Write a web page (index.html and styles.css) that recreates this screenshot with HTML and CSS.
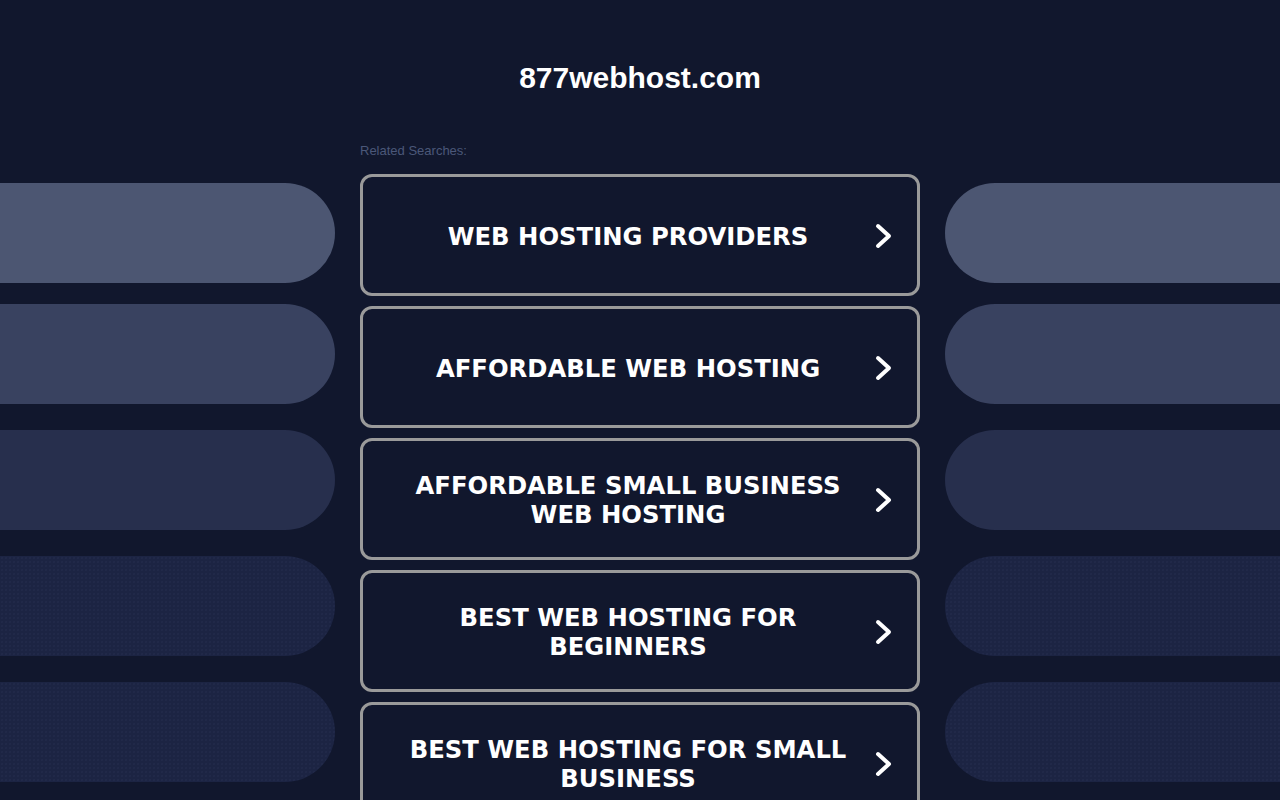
FILE: index.html
```html
<!DOCTYPE html>
<html lang="en">
<head>
  <meta charset="UTF-8">
  <meta name="viewport" content="width=device-width, initial-scale=1.0">
  <title>877webhost.com</title>
  <link rel="stylesheet" href="styles.css">
</head>
<body>
  <header>
    <h1 class="domain">877webhost.com</h1>
  </header>

  <div class="layout">
    <div class="side side-left">
      <div class="pill pill-1"></div>
      <div class="pill pill-2"></div>
      <div class="pill pill-3"></div>
      <div class="pill pill-4"></div>
      <div class="pill pill-5"></div>
    </div>

    <div class="searches">
      <p class="searches-label">Related Searches:</p>
      <a href="#" class="search-link">
        <span class="search-text">WEB HOSTING PROVIDERS</span>
        <svg class="chevron" viewBox="0 0 20 28"><polyline points="5,4 16,14 5,24"/></svg>
      </a>
      <a href="#" class="search-link">
        <span class="search-text">AFFORDABLE WEB HOSTING</span>
        <svg class="chevron" viewBox="0 0 20 28"><polyline points="5,4 16,14 5,24"/></svg>
      </a>
      <a href="#" class="search-link">
        <span class="search-text">AFFORDABLE SMALL BUSINESS WEB HOSTING</span>
        <svg class="chevron" viewBox="0 0 20 28"><polyline points="5,4 16,14 5,24"/></svg>
      </a>
      <a href="#" class="search-link">
        <span class="search-text">BEST WEB HOSTING FOR BEGINNERS</span>
        <svg class="chevron" viewBox="0 0 20 28"><polyline points="5,4 16,14 5,24"/></svg>
      </a>
      <a href="#" class="search-link">
        <span class="search-text">BEST WEB HOSTING FOR SMALL BUSINESS</span>
        <svg class="chevron" viewBox="0 0 20 28"><polyline points="5,4 16,14 5,24"/></svg>
      </a>
    </div>

    <div class="side side-right">
      <div class="pill pill-1"></div>
      <div class="pill pill-2"></div>
      <div class="pill pill-3"></div>
      <div class="pill pill-4"></div>
      <div class="pill pill-5"></div>
    </div>
  </div>
</body>
</html>
```

FILE: styles.css
```css
body {
  margin: 0;
  padding: 0;
  background-color: #11172d;
  font-family: "Liberation Sans", Arial, sans-serif;
  overflow: hidden;
}
header {
  padding: 60px 0 44px;
  text-align: center;
}
.domain {
  margin: 0;
  font-size: 30px;
  line-height: 36px;
  font-weight: bold;
  color: #ffffff;
}
.layout {
  display: grid;
  grid-template-columns: 335px 560px 335px;
  column-gap: 25px;
}
.side {
  display: flex;
  flex-direction: column;
  padding-top: 43px;
}
.pill {
  height: 100px;
  margin-bottom: 26px;
  flex-shrink: 0;
}
.pill-1 {
  margin-bottom: 21px;
  background-color: #4c5672;
}
.pill-2 {
  background-color: #394260;
}
.pill-3 {
  background-color: #272f4d;
}
.pill-4,
.pill-5 {
  background-color: #1c2443;
  background-image: radial-gradient(circle, rgba(52, 62, 96, 0.25) 0.6px, transparent 1px);
  background-size: 4px 4px;
}
.side-left .pill {
  border-radius: 0 50px 50px 0;
}
.side-right .pill {
  border-radius: 50px 0 0 50px;
}
.searches {
  display: flex;
  flex-direction: column;
  gap: 10px;
}
.searches-label {
  margin: 1px 0 3px;
  font-size: 13px;
  line-height: 20px;
  color: #4b5779;
}
.search-link {
  display: flex;
  align-items: center;
  height: 122px;
  box-sizing: border-box;
  padding: 2px 24px 0 30px;
  border: 3px solid #9a9a9a;
  border-radius: 12px;
  color: #ffffff;
  text-decoration: none;
}
.search-text {
  flex: 1;
  text-align: center;
  font-family: "DejaVu Sans", Verdana, sans-serif;
  font-weight: bold;
  font-size: 24.3px;
  line-height: 29px;
}
.chevron {
  width: 20px;
  height: 28px;
  margin-left: 10px;
  fill: none;
  stroke: #ffffff;
  stroke-width: 4;
  stroke-linecap: round;
  stroke-linejoin: round;
}
```
